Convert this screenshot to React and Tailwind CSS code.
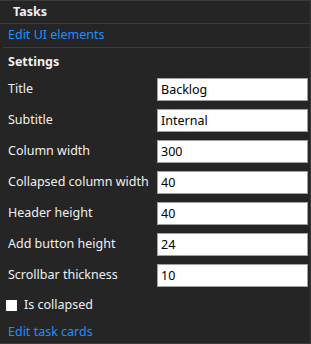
import React from "react";

const rows = [
  ["Title", "Backlog"],
  ["Subtitle", "Internal"],
  ["Column width", "300"],
  ["Collapsed column width", "40"],
  ["Header height", "40"],
  ["Add button height", "24"],
  ["Scrollbar thickness", "10"],
];

export default function App() {
  return (
    <div
      className="w-[311px] h-[344px] bg-[#252526] text-[#f0f0f0] border-t border-r border-b border-[#3a3a3a] overflow-hidden text-[12.5px]"
      style={{ fontFamily: '"Segoe UI", "Noto Sans", sans-serif' }}
    >
      <div className="h-[23px] border-b border-[#3a3a3a] pl-[13px] flex items-center font-bold">
        Tasks
      </div>
      <div className="h-[24px] ml-[3px] pl-[5px] border-b border-[#3a3a3a] flex items-center text-[#1e8fff]">
        Edit UI elements
      </div>
      <div className="h-[28px] pl-[8px] flex items-center font-bold">
        Settings
      </div>
      <div className="flex flex-col gap-[8px] pl-[8px] pr-[2px] pt-[2px]">
        {rows.map(([label, value]) => (
          <div key={label} className="flex items-center h-[23px]">
            <span className="w-[149px] shrink-0">{label}</span>
            <input
              defaultValue={value}
              className="w-[151px] h-[23px] bg-white border border-[#a0a0a0] text-black px-[3px] text-[12.5px] outline-none"
            />
          </div>
        ))}
      </div>
      <div className="flex items-center h-[24px] mt-[6px] pl-[6px] gap-[7px]">
        <span className="w-[11px] h-[11px] bg-white inline-block" />
        <span>Is collapsed</span>
      </div>
      <div className="h-[30px] pl-[8px] flex items-center text-[#1e8fff]">
        Edit task cards
      </div>
    </div>
  );
}
